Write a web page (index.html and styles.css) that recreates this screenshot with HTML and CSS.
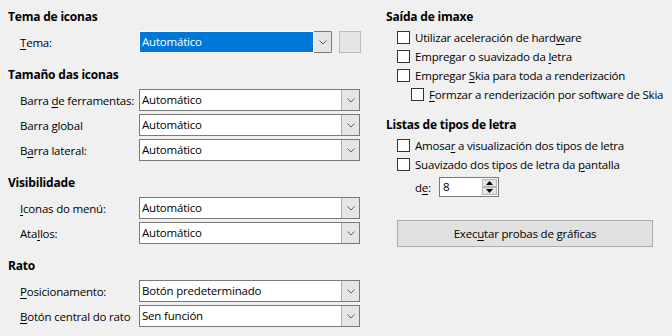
FILE: index.html
```html
<!DOCTYPE html>
<html lang="gl">
<head>
  <meta charset="UTF-8">
  <title>Ver</title>
  <link rel="stylesheet" href="styles.css">
</head>
<body>

  <div class="dialog">
    <div class="col left-col">

      <div class="group">
        <div class="group-title">Tema de iconas</div>
        <div class="row">
          <span class="lbl"><u>T</u>ema:</span>
          <div class="combo combo-narrow combo-focus">
            <span class="val">Automático</span>
            <span class="drop"><svg width="8" height="5" viewBox="0 0 8 5"><polyline points="0.5,0.5 4,4 7.5,0.5" /></svg></span>
          </div>
          <span class="square-btn"></span>
        </div>
      </div>

      <div class="group">
        <div class="group-title">Tamaño das iconas</div>
        <div class="row">
          <span class="lbl">Barra <u>d</u>e ferramentas:</span>
          <div class="combo">
            <span class="val">Automático</span>
            <span class="drop"><svg width="8" height="5" viewBox="0 0 8 5"><polyline points="0.5,0.5 4,4 7.5,0.5" /></svg></span>
          </div>
        </div>
        <div class="row">
          <span class="lbl">Barra <u>g</u>lobal</span>
          <div class="combo">
            <span class="val">Automático</span>
            <span class="drop"><svg width="8" height="5" viewBox="0 0 8 5"><polyline points="0.5,0.5 4,4 7.5,0.5" /></svg></span>
          </div>
        </div>
        <div class="row">
          <span class="lbl">B<u>a</u>rra lateral:</span>
          <div class="combo">
            <span class="val">Automático</span>
            <span class="drop"><svg width="8" height="5" viewBox="0 0 8 5"><polyline points="0.5,0.5 4,4 7.5,0.5" /></svg></span>
          </div>
        </div>
      </div>

      <div class="group">
        <div class="group-title">Visibilidade</div>
        <div class="row">
          <span class="lbl"><u>I</u>conas do menú:</span>
          <div class="combo">
            <span class="val">Automático</span>
            <span class="drop"><svg width="8" height="5" viewBox="0 0 8 5"><polyline points="0.5,0.5 4,4 7.5,0.5" /></svg></span>
          </div>
        </div>
        <div class="row">
          <span class="lbl">Ata<u>l</u>los:</span>
          <div class="combo">
            <span class="val">Automático</span>
            <span class="drop"><svg width="8" height="5" viewBox="0 0 8 5"><polyline points="0.5,0.5 4,4 7.5,0.5" /></svg></span>
          </div>
        </div>
      </div>

      <div class="group">
        <div class="group-title">Rato</div>
        <div class="row">
          <span class="lbl"><u>P</u>osicionamento:</span>
          <div class="combo">
            <span class="val">Botón predeterminado</span>
            <span class="drop"><svg width="8" height="5" viewBox="0 0 8 5"><polyline points="0.5,0.5 4,4 7.5,0.5" /></svg></span>
          </div>
        </div>
        <div class="row">
          <span class="lbl"><u>B</u>otón central do rato</span>
          <div class="combo">
            <span class="val">Sen función</span>
            <span class="drop"><svg width="8" height="5" viewBox="0 0 8 5"><polyline points="0.5,0.5 4,4 7.5,0.5" /></svg></span>
          </div>
        </div>
      </div>

    </div>

    <div class="col right-col">

      <div class="group">
        <div class="group-title">Saída de imaxe</div>
        <label class="check"><span class="box"></span><span>Utilizar aceleración de hard<u>w</u>are</span></label>
        <label class="check"><span class="box"></span><span>Empregar o suavizado da <u>l</u>etra</span></label>
        <label class="check"><span class="box"></span><span>Empregar <u>S</u>kia para toda a renderización</span></label>
        <label class="check check-sub"><span class="box"></span><span><u>F</u>ormzar a renderización por software de Skia</span></label>
      </div>

      <div class="group">
        <div class="group-title">Listas de tipos de letra</div>
        <label class="check"><span class="box"></span><span>Amosa<u>r</u> a visualización dos tipos de letra</span></label>
        <label class="check"><span class="box"></span><span>Suavizado dos tipos de letra da <u>p</u>antalla</span></label>
        <div class="spin-row">
          <span class="spin-lbl">d<u>e</u>:</span>
          <div class="spin">
            <span class="spin-val">8</span>
            <span class="spin-btns">
              <span class="spin-btn"><svg width="7" height="4" viewBox="0 0 7 4"><polygon points="3.5,0 7,4 0,4" /></svg></span>
              <span class="spin-btn"><svg width="7" height="4" viewBox="0 0 7 4"><polygon points="0,0 7,0 3.5,4" /></svg></span>
            </span>
          </div>
        </div>
      </div>

      <button type="button" class="test-button">Exec<u>u</u>tar probas de gráficas</button>

    </div>
  </div>

</body>
</html>
```

FILE: styles.css
```css
body {
  margin: 0;
  background: #f0f0f0;
  font-family: 'Open Sans', 'Noto Sans', sans-serif;
  font-size: 11.5px;
  letter-spacing: -0.2px;
  color: #000;
}

u {
  text-decoration-thickness: 1px;
  text-underline-offset: 2px;
}

.dialog {
  display: flex;
  padding: 8px 0 0 8px;
}

.col {
  display: flex;
  flex-direction: column;
}

.left-col {
  width: 353px;
}

.right-col {
  width: 280px;
  margin-left: 25px;
}

.group-title {
  height: 18px;
  line-height: 18px;
  font-size: 12px;
  font-weight: bold;
}

/* left side */

.left-col .group {
  display: flex;
  flex-direction: column;
  gap: 3px;
  margin-bottom: 13px;
}

.left-col .group-title {
  margin-bottom: 2px;
}

.row {
  display: flex;
  align-items: center;
  height: 22px;
  padding-left: 12px;
}

.lbl {
  width: 119px;
  flex: none;
  white-space: nowrap;
}

.combo {
  display: flex;
  width: 221px;
  height: 22px;
  box-sizing: border-box;
  border: 1px solid #7a7a7a;
  background: #fff;
}

.combo-narrow {
  width: 193px;
}

.val {
  flex: 1;
  padding-left: 2px;
  line-height: 20px;
  white-space: nowrap;
}

.drop {
  width: 17px;
  flex: none;
  display: flex;
  align-items: center;
  justify-content: center;
  background: #e5e5e5;
  border-left: 1px solid #adadad;
}

.drop svg polyline {
  fill: none;
  stroke: #606060;
  stroke-width: 1;
}

.combo-focus {
  border-left: none;
  border-top-color: transparent;
  border-bottom-color: transparent;
  background: transparent;
}

.combo-focus .val {
  margin: -1px 0;
  border: 1px dotted #000;
  background: #0078d7 padding-box;
  color: #fff;
  line-height: 20px;
  outline: 1px solid #fff;
  outline-offset: -1px;
}

.combo-focus .drop {
  margin: -1px 0;
  border: 1px solid #7a7a7a;
  border-left: none;
  border-right: none;
}

.square-btn {
  width: 22px;
  height: 22px;
  box-sizing: border-box;
  margin-left: 7px;
  border: 1px solid #bcbcbc;
  background: #e5e5e5;
}

/* right side */

.right-col .group {
  display: flex;
  flex-direction: column;
}

.right-col .group-title {
  margin-bottom: 2px;
}

.right-col .group + .group {
  margin-top: 12px;
}

.check {
  display: flex;
  align-items: center;
  height: 19px;
  padding-left: 11px;
  white-space: nowrap;
}

.check-sub {
  padding-left: 25px;
}

.box {
  width: 13px;
  height: 13px;
  box-sizing: border-box;
  border: 1px solid #333;
  background: #fff;
  margin-right: 5px;
  flex: none;
}

.spin-row {
  display: flex;
  align-items: center;
  height: 20px;
  margin-top: 3px;
  padding-left: 29px;
}

.spin-lbl {
  width: 24px;
}

.spin {
  display: flex;
  width: 60px;
  height: 20px;
  box-sizing: border-box;
  border: 1px solid #7a7a7a;
  background: #fff;
}

.spin-val {
  flex: 1;
  padding-left: 3px;
  line-height: 18px;
}

.spin-btns {
  display: flex;
  flex-direction: column;
  width: 15px;
  padding: 1px 1px 1px 0;
}

.spin-btn {
  flex: 1;
  display: flex;
  align-items: center;
  justify-content: center;
  background: #e5e5e5;
  border: 1px solid #b5b5b5;
}

.spin-btn svg polygon {
  fill: #000;
}

.test-button {
  margin: 23px 0 0 11px;
  width: 256px;
  height: 27px;
  background: #e1e1e1;
  border: 1px solid #adadad;
  border-radius: 0;
  font-family: inherit;
  font-size: inherit;
  letter-spacing: inherit;
  color: #000;
  padding: 0;
}
```
